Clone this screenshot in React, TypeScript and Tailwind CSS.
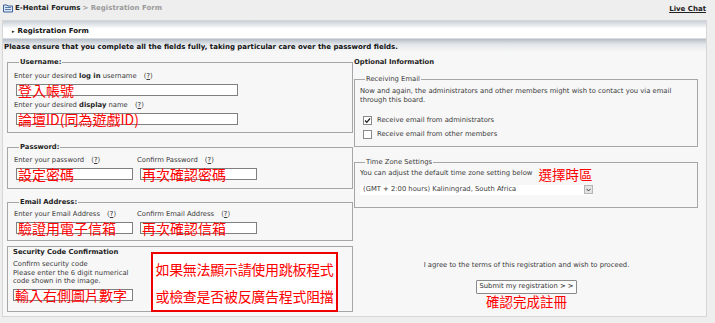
import React from "react";

const cjk = "font-['Noto_Sans_CJK_TC','Noto_Sans_CJK_SC',sans-serif]";

function RedInput({ w, text, ml = "ml-[2px]" }: { w: string; text: string; ml?: string }) {
  return (
    <div className={`${w} ${ml} h-[12px] border border-[#7f7f7f] bg-white`}>
      <div className={`${cjk} text-[14px] leading-[11px] text-[#ff0000] whitespace-nowrap pl-[1px]`}>{text}</div>
    </div>
  );
}

function HelpP() {
  return (
    <span className="ml-[5px]">
      (<span className="underline">?</span>)
    </span>
  );
}

function Check({ checked }: { checked?: boolean }) {
  return (
    <div className="w-[9px] h-[9px] border border-[#8a8a8a] bg-white flex items-center justify-center shrink-0">
      {checked && (
        <svg width="7" height="7" viewBox="0 0 7 7">
          <path d="M1 3.5 L2.8 5.3 L6 1.5" stroke="#222" strokeWidth="1.3" fill="none" />
        </svg>
      )}
    </div>
  );
}

export default function App() {
  return (
    <div className="w-[715px] h-[323px] bg-[#eeeeee] overflow-hidden font-['DejaVu_Sans','Verdana',sans-serif] text-[6.8px] leading-[9px] text-[#3a3a3a]">
      {/* top bar */}
      <div className="h-[20px] flex justify-between items-start pl-[3px] pr-[9px] pt-[3px]">
        <div className="flex items-center gap-[2px]">
          <svg width="10" height="10" viewBox="0 0 10 10">
            <path d="M0.5 2 H4 L5 3 H9.5 V9 H0.5 Z" fill="#dbe6f4" stroke="#3d5f9a" strokeWidth="1" />
            <path d="M2 4.5 H8 M2 6.5 H8" stroke="#3d5f9a" strokeWidth="0.8" />
          </svg>
          <span className="font-bold text-[7px] text-[#222]">E-Hentai Forums</span>
          <span className="text-[7px] text-[#9a9a9a] font-bold">&gt; Registration Form</span>
        </div>
        <span className="font-bold text-[7px] text-[#222] underline mt-[2px]">Live Chat</span>
      </div>

      {/* main panel */}
      <div className="ml-[2px] w-[705px] h-[297px] border border-[#d6d6d6] bg-[#f7f7f7] flex flex-col">
        <div className="h-[18px] bg-gradient-to-b from-[#c9d0d8] via-[#ffffff] via-45% to-[#ffffff] flex items-center pt-[3px] pl-[9px] font-bold text-[7px] text-[#111] border-b border-[#d8dce0]">
          <span className="text-[5px] mr-[3px]">▸</span>Registration Form
        </div>
        <div className="h-[13px] bg-gradient-to-b from-[#b5bdc6] via-[#e2e6ea] via-40% to-[#f7f7f7] flex items-end pl-[1px] font-bold text-[7px] text-[#111]">
          Please ensure that you complete all the fields fully, taking particular care over the password fields.
        </div>

        <div className="flex flex-1">
          {/* left column */}
          <div className="w-[350px] pl-[4px] pt-[6px]">
            <fieldset className="border border-[#a6a6a6] pl-[6px] pb-[7px] w-[346px]">
              <legend className="font-bold text-[#222] px-[1px] ml-[5px]">Username:</legend>
              <div className="mt-[5px]">
                Enter your desired <b className="text-[#222]">log in</b> username <HelpP />
              </div>
              <div className="mt-[3px]">
                <RedInput w="w-[222px]" text="登入帳號" />
              </div>
              <div className="mt-[5px]">
                Enter your desired <b className="text-[#222]">display</b> name <HelpP />
              </div>
              <div className="mt-[3px]">
                <RedInput w="w-[222px]" text="論壇ID(同為遊戲ID)" />
              </div>
            </fieldset>

            <fieldset className="border border-[#a6a6a6] pl-[6px] pb-[8px] w-[346px] mt-[10px]">
              <legend className="font-bold text-[#222] px-[1px] ml-[5px]">Password:</legend>
              <div className="flex mt-[4px]">
                <div className="w-[123px]">Enter your password <HelpP /></div>
                <div>Confirm Password <HelpP /></div>
              </div>
              <div className="flex mt-[3px]">
                <div className="w-[123px]">
                  <RedInput w="w-[117px]" text="設定密碼" />
                </div>
                <RedInput w="w-[117px]" text="再次確認密碼" ml="ml-[3px]" />
              </div>
            </fieldset>

            <fieldset className="border border-[#a6a6a6] pl-[6px] pb-[6px] w-[346px] mt-[9px]">
              <legend className="font-bold text-[#222] px-[1px] ml-[5px]">Email Address:</legend>
              <div className="flex mt-[3px]">
                <div className="w-[123px]">Enter your Email Address <HelpP /></div>
                <div>Confirm Email Address <HelpP /></div>
              </div>
              <div className="flex mt-[3px]">
                <div className="w-[123px]">
                  <RedInput w="w-[117px]" text="驗證用電子信箱" />
                </div>
                <RedInput w="w-[117px]" text="再次確認信箱" ml="ml-[3px]" />
              </div>
            </fieldset>

            <div className="mt-[5px] w-[346px] h-[66px] border border-[#a6a6a6] flex">
              <div className="w-[143px] pl-[5px] pt-[1px]">
                <div className="font-bold text-[#222]">Security Code Confirmation</div>
                <div className="mt-[3px] leading-[8.5px]">
                  Confirm security code
                  <br />
                  Please enter the 6 digit numerical
                  <br />
                  code shown in the image.
                </div>
                <div className="mt-[3px]">
                  <RedInput w="w-[120px]" text="輸入右側圖片數字" ml="ml-0" />
                </div>
              </div>
              <div className="mt-[5px] w-[187px] h-[60px] border-2 border-[#ee0000] bg-white flex flex-col items-center pt-[2px]">
                <div className={`${cjk} text-[14px] leading-[27px] text-[#ff0000] tracking-[-0.3px]`}>如果無法顯示請使用跳板程式</div>
                <div className={`${cjk} text-[14px] leading-[27px] text-[#ff0000] tracking-[-0.3px]`}>或檢查是否被反廣告程式阻擋</div>
              </div>
            </div>
          </div>

          {/* right column */}
          <div className="w-[345px] ml-[1px] pt-[6px]">
            <div className="font-bold text-[#222]">Optional Information</div>
            <fieldset className="border border-[#a6a6a6] pl-[5px] pb-[7px] w-[344px] mt-[8px]">
              <legend className="px-[1px] ml-[5px]">Receiving Email</legend>
              <div className="mt-[3px] leading-[9.4px]">
                Now and again, the administrators and other members might wish to contact you via email
                <br />
                through this board.
              </div>
              <div className="mt-[10px] flex items-center gap-[5px] pl-[3px]">
                <Check checked />
                <span>Receive email from administrators</span>
              </div>
              <div className="mt-[5px] flex items-center gap-[5px] pl-[3px]">
                <Check />
                <span>Receive email from other members</span>
              </div>
            </fieldset>

            <fieldset className="border border-[#a6a6a6] pl-[5px] pb-[12px] w-[344px] mt-[11px]">
              <legend className="px-[1px] ml-[5px]">Time Zone Settings</legend>
              <div className="flex items-center mt-[0px]">
                <span>You can adjust the default time zone setting below</span>
                <span className={`${cjk} text-[13.5px] leading-[14px] text-[#ff0000] ml-[6px]`}>選擇時區</span>
              </div>
              <div className="mt-[4px] w-[233px] h-[10px] bg-white flex items-center justify-between">
                <span className="pl-[3px]">(GMT + 2:00 hours) Kaliningrad, South Africa</span>
                <div className="w-[9px] h-[9px] bg-[#e4e4e4] border border-[#b4b4b4] flex items-center justify-center">
                  <svg width="5" height="4" viewBox="0 0 5 4">
                    <path d="M0.5 0.8 L2.5 3 L4.5 0.8" stroke="#333" strokeWidth="0.9" fill="none" />
                  </svg>
                </div>
              </div>
            </fieldset>

            <div className="flex flex-col items-center mt-[53px]">
              <div>I agree to the terms of this registration and wish to proceed.</div>
              <div className="mt-[10px] h-[14px] px-[2px] border border-[#8a8a8a] bg-[#fbfbfb] rounded-[1px] flex items-center text-[#333]">
                Submit my registration &gt; &gt;
              </div>
              <div className={`${cjk} text-[13.5px] leading-[14px] text-[#ff0000]`}>確認完成註冊</div>
            </div>
          </div>
        </div>
      </div>
    </div>
  );
}
